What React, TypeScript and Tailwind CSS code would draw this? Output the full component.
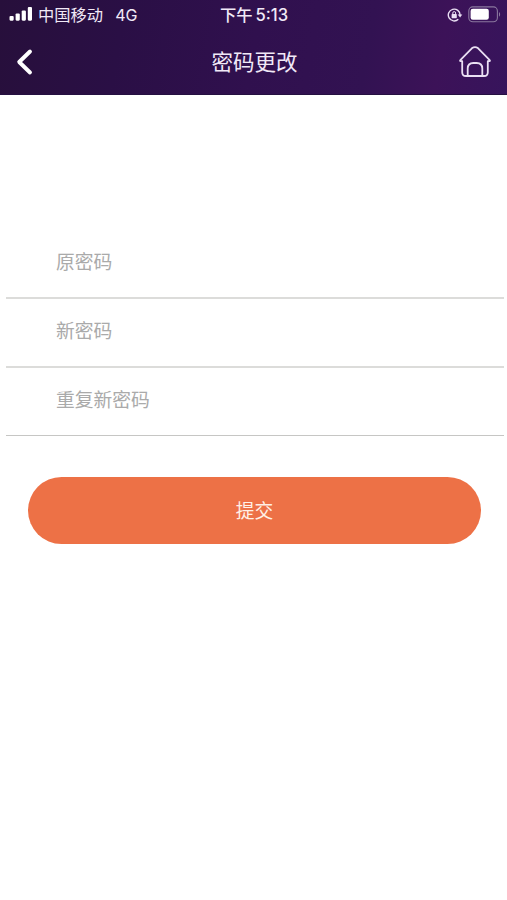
const fields = ['原密码', '新密码', '重复新密码'];

function SignalIcon() {
  return (
    <svg width="24" height="16" viewBox="0 0 24 16" fill="#fff" aria-hidden="true">
      <rect x="0.5" y="10" width="4.2" height="4.7" rx="1.1" />
      <rect x="6.6" y="7.5" width="4.2" height="7.2" rx="1.1" />
      <rect x="12.7" y="4.5" width="4.2" height="10.2" rx="1.1" />
      <rect x="18.8" y="1" width="4.2" height="13.7" rx="1.1" />
    </svg>
  );
}

function RotationLockIcon() {
  return (
    <svg width="16" height="14" viewBox="0 0 16 14" fill="none" stroke="#e9dff3" aria-hidden="true">
      <path d="M11.3 11.3A5.9 5.9 0 1 1 13.1 7" strokeWidth="1.4" />
      <path d="M10.7 6.4h4.6l-2.2 3z" fill="#e9dff3" stroke="none" />
      <rect x="4.6" y="6.1" width="5.2" height="4.1" rx="0.6" fill="#e9dff3" stroke="none" />
      <path d="M5.8 6.4V5a1.4 1.4 0 0 1 2.8 0v1.4" strokeWidth="1" />
    </svg>
  );
}

function BatteryIcon() {
  return (
    <svg width="33" height="17" viewBox="0 0 33 17" fill="none" aria-hidden="true">
      <rect x="0.8" y="0.9" width="28.6" height="14.8" rx="4" stroke="#8b789f" strokeWidth="1.1" />
      <rect x="2.6" y="2.8" width="18.2" height="11" rx="2.2" fill="#fff" />
      <path d="M31 6v4.8c1.5-.8 1.5-4 0-4.8z" fill="#8b789f" />
    </svg>
  );
}

function BackIcon() {
  return (
    <svg width="18" height="28" viewBox="0 0 18 28" fill="none" stroke="#fff" strokeWidth="3.9" strokeLinejoin="round" aria-hidden="true">
      <path d="M15 3.5 4.2 14 15 24.5" strokeLinecap="round" />
    </svg>
  );
}

function HomeIcon() {
  return (
    <svg width="32" height="32" viewBox="0 0 32 32" fill="none" stroke="#eadff3" strokeWidth="1.8" strokeLinejoin="round" strokeLinecap="round" aria-hidden="true">
      <path d="M3.2 15.2H1.5C1 15.2.9 14.7 1.3 14.2L13.1 2.1Q16 .1 18.9 2.1L30.7 14.2C31.1 14.7 31 15.2 30.5 15.2H28.8V26.2Q28.8 30 25 30H7Q3.2 30 3.2 26.2Z" />
      <path d="M8.7 29.6V22.6Q8.7 17 14.3 17H17.7Q23.3 17 23.3 22.6V29.6" />
    </svg>
  );
}

export default function App() {
  return (
    <main className="flex h-[900px] w-full flex-col overflow-hidden bg-white font-['Inter','Noto_Sans_CJK_SC',sans-serif]">
      <header className="h-[95px] shrink-0 border-b border-[#251041] bg-[linear-gradient(100deg,#270f3b_0%,#2a0f45_24%,#30104e_50%,#321252_72%,#3c1258_86%,#37145c_100%)] text-[#f1e9f7]">
        <div className="grid h-[29px] grid-cols-[1fr_auto_1fr] items-center">
          <div className="flex items-center pl-[9px]">
            <SignalIcon />
            <span className="ml-[5px] pt-[2px] text-[16.3px] leading-none">中国移动</span>
            <span className="ml-[12px] pt-px text-[16px] leading-none">4G</span>
          </div>
          <div className="flex items-center gap-[3px] pl-px pt-[2px] text-[16.3px] font-medium leading-none">
            <span>下午</span>
            <span className="text-[16.6px]">5:13</span>
          </div>
          <div className="flex items-center justify-end gap-[5px] pr-[6px]">
            <RotationLockIcon />
            <BatteryIcon />
          </div>
        </div>
        <div className="grid h-[65px] grid-cols-[1fr_auto_1fr] items-center">
          <button className="ml-[15px] w-fit" aria-label="返回">
            <BackIcon />
          </button>
          <h1 className="pl-[2px] pt-[3px] text-[21.5px] leading-none">密码更改</h1>
          <button className="mr-[16.5px] justify-self-end" aria-label="首页">
            <HomeIcon />
          </button>
        </div>
      </header>
      <form className="flex flex-col pt-[135px]">
        <div className="ml-[6px] mr-[3px]">
          {fields.map((label) => (
            <label key={label} className="flex h-[69px] items-center border-b-2 border-[#dcdcda] pl-[50px] text-[18.8px] leading-none text-[#aaaaaa] last:h-[68px] last:border-b last:border-[#c6c6c4]">
              {label}
            </label>
          ))}
        </div>
        <button type="button" className="ml-[28px] mr-[26px] mt-[41px] h-[67px] rounded-full bg-[#ed7146] pt-[4px] text-[18.8px] leading-none text-[#fff0e6]">
          提交
        </button>
      </form>
    </main>
  );
}
